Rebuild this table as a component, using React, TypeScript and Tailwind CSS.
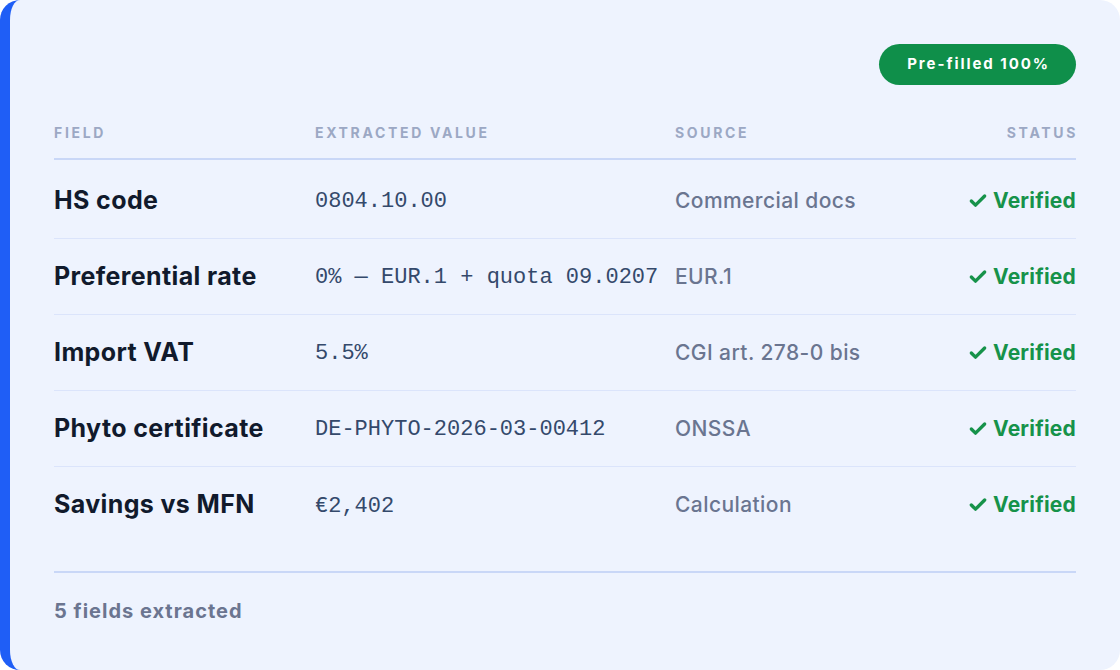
import { Check } from 'lucide-react';

interface Row {
  field: string;
  value: string;
  source: string;
}

const rows: Row[] = [
  { field: 'HS code', value: '0804.10.00', source: 'Commercial docs' },
  { field: 'Preferential rate', value: '0% — EUR.1 + quota 09.0207', source: 'EUR.1' },
  { field: 'Import VAT', value: '5.5%', source: 'CGI art. 278-0 bis' },
  { field: 'Phyto certificate', value: 'DE-PHYTO-2026-03-00412', source: 'ONSSA' },
  { field: 'Savings vs MFN', value: '€2,402', source: 'Calculation' },
];

const cols = 'grid grid-cols-[261px_360px_1fr_auto] items-center';

export default function App() {
  return (
    <div className="h-[670px] w-[1120px] bg-white font-['Inter',sans-serif]">
      <div className="flex h-full flex-col rounded-[20px] border-l-[10px] border-[#1f5ef6] bg-[#eef3fe] px-[44px] pt-[44px]">
        <div className="flex justify-end">
          <span className="flex h-[41px] items-center rounded-full bg-[#0f8f4a] pl-[28px] pr-[26px] text-[15px] font-bold tracking-[0.13em] text-white">
            Pre-filled 100%
          </span>
        </div>

        {/* table header */}
        <div className={`${cols} mt-[20px] h-[55px] border-b-2 border-[#c9d7f7] pt-[1px] text-[14px] font-bold uppercase tracking-[0.19em] text-[#9ca8c4]`}>
          <div>Field</div>
          <div>Extracted value</div>
          <div>Source</div>
          <div className="mr-[-2px] text-right">Status</div>
        </div>

        <div className="mt-[3px]">
          {rows.map((row, i) => (
            <div
              key={row.field}
              className={`${cols} h-[76px] ${i < rows.length - 1 ? 'border-b border-[#dbe4fb]' : ''}`}
            >
              <div className="text-[25px] font-bold tracking-[0.015em] text-[#111a2c]">{row.field}</div>
              <div className="pt-[2px] font-['Liberation_Mono',monospace] text-[22px] text-[#34496b]">{row.value}</div>
              <div className="text-[21px] font-medium tracking-[0.02em] text-[#6a7590]">{row.source}</div>
              <div className="flex items-center justify-end gap-[5px] text-[21px] font-bold tracking-[0.01em] text-[#16924a]">
                <Check size={20} strokeWidth={4} />
                Verified
              </div>
            </div>
          ))}
        </div>

        <div className="mt-[28px] border-t-2 border-[#c9d7f7] pt-[23px] text-[20px] font-bold tracking-[0.05em] text-[#6b7590]">
          5 fields extracted
        </div>
      </div>
    </div>
  );
}
